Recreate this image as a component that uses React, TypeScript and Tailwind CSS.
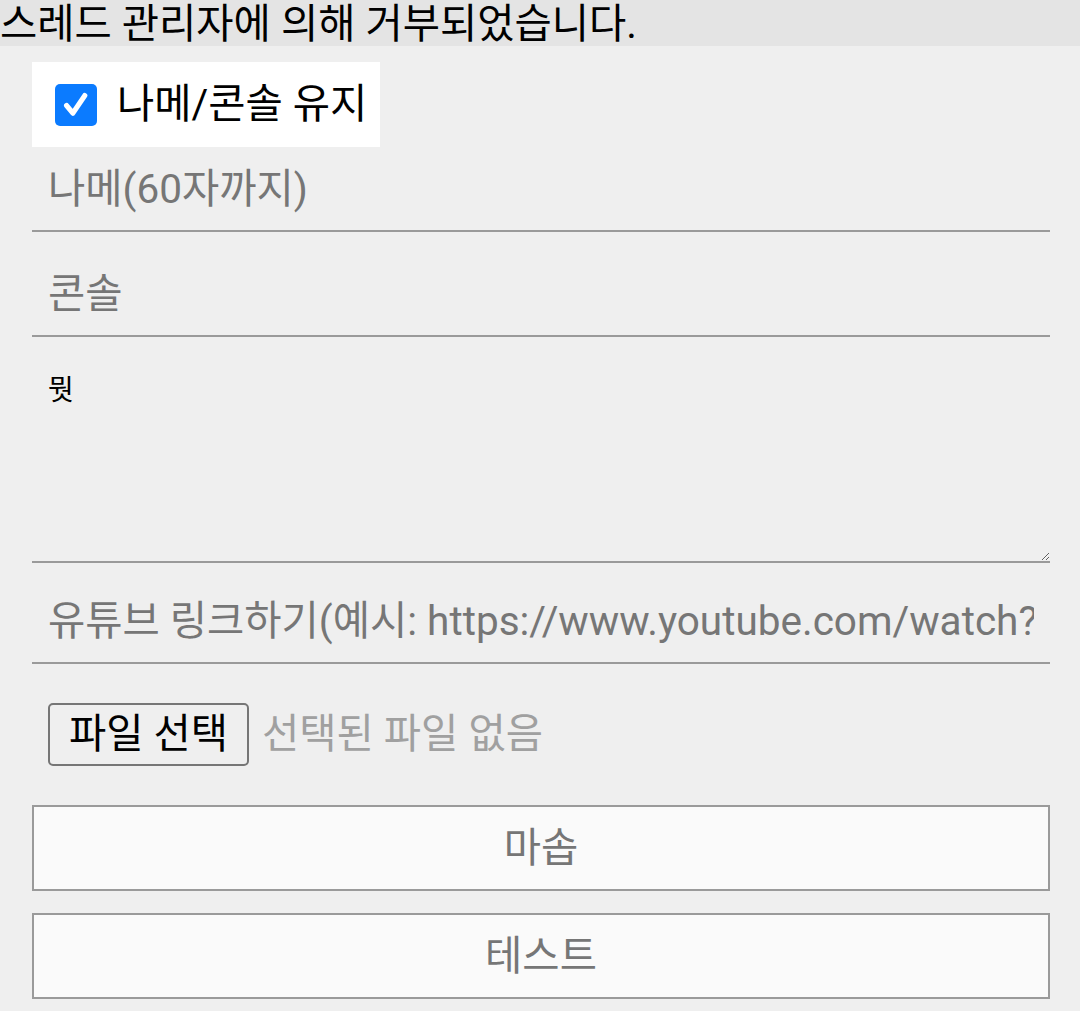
const font = "font-['Roboto','Noto_Sans_CJK_KR',sans-serif]";

const App = () => {
    return (
        <div className={`min-h-[1011px] w-[1080px] bg-[#efefef] ${font}`}>
            <div className="h-[46px] bg-[#e4e4e4] text-[40.5px] leading-[48px] text-black whitespace-nowrap">
                스레드 관리자에 의해 거부되었습니다.
            </div>
            <div className="flex flex-col pl-[32px] pr-[30px] pt-[16px]">
                <label className="flex items-center self-start h-[85px] w-[348px] bg-white pl-[23px]">
                    <span className="flex items-center justify-center w-[42px] h-[42px] rounded-[5px] bg-[#0b7bff]">
                        <svg width="30" height="30" viewBox="0 0 24 24" fill="none">
                            <path d="M4.5 12.5 L9.5 18.5 L19 4.5" stroke="white" strokeWidth="4.2" strokeLinecap="round" strokeLinejoin="round" />
                        </svg>
                    </span>
                    <span className="ml-[20px] text-[40.5px] text-black">나메/콘솔 유지</span>
                </label>
                <input
                    className={`h-[85px] px-[16px] bg-transparent border-b-2 border-[#9a9a9a] text-[40.5px] outline-none placeholder:text-[#767676] ${font}`}
                    placeholder="나메(60자까지)"
                />
                <input
                    className={`mt-[20px] h-[85px] px-[16px] bg-transparent border-b-2 border-[#9a9a9a] text-[40.5px] outline-none placeholder:text-[#767676] ${font}`}
                    placeholder="콘솔"
                />
                <textarea
                    className={`mt-[20px] h-[206px] px-[16px] pt-[14px] bg-transparent border-b-2 border-[#9a9a9a] text-[28px] leading-[40px] text-black outline-none ${font}`}
                    defaultValue="뭣"
                />
                <input
                    className={`mt-[16px] h-[85px] px-[16px] bg-transparent border-b-2 border-[#9a9a9a] text-[40.5px] outline-none placeholder:text-[#767676] ${font}`}
                    placeholder="유튜브 링크하기(예시: https://www.youtube.com/watch?v=xxxxxxxx)"
                />
                <div className="mt-[39px] ml-[16px] flex items-center">
                    <button className="h-[63px] w-[201px] rounded-[5px] border-2 border-[#767676] bg-[#efefef] text-[40.5px] text-black leading-none">
                        파일 선택
                    </button>
                    <span className="ml-[13px] text-[40.5px] text-[#a0a0a0]">선택된 파일 없음</span>
                </div>
                <button className="mt-[39px] h-[86px] border-2 border-[#9a9a9a] bg-[#fafafa] text-[40.5px] text-[#767676]">
                    마솝
                </button>
                <button className="mt-[22px] h-[86px] border-2 border-[#9a9a9a] bg-[#fafafa] text-[40.5px] text-[#767676]">
                    테스트
                </button>
            </div>
        </div>
    );
};

export default App;
